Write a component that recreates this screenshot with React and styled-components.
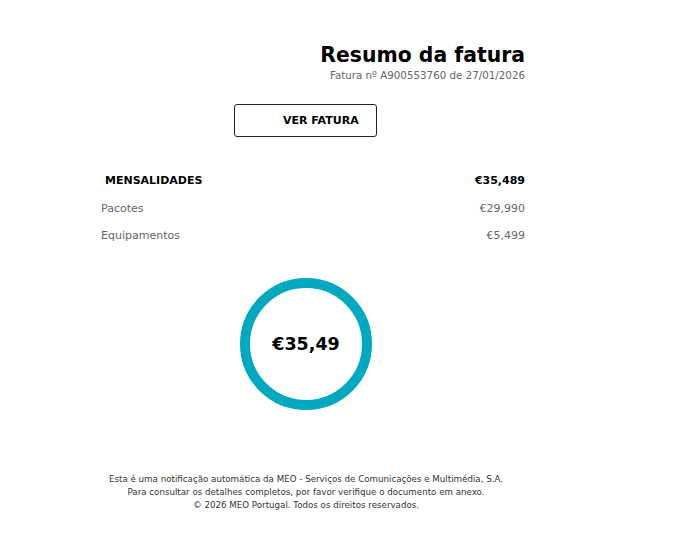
import React from 'react';
import styled, { createGlobalStyle } from 'styled-components';

const GlobalStyle = createGlobalStyle`
  body {
    margin: 0;
    background: #ffffff;
    font-family: "DejaVu Sans", Verdana, sans-serif;
    color: #000;
  }
`;

const Page = styled.div`
  width: 680px;
  height: 554px;
  background: #ffffff;
  padding-top: 43px;
  box-sizing: border-box;
`;

const Column = styled.div`
  width: 425px;
  margin-left: 100px;
`;

const Header = styled.div`
  display: flex;
  flex-direction: column;
  align-items: flex-end;
`;

const Title = styled.h1`
  margin: 0;
  font-size: 20.4px;
  font-weight: bold;
  line-height: 24px;
`;

const Subtitle = styled.div`
  margin-top: 2px;
  font-size: 10.3px;
  color: #666;
`;

const ButtonRow = styled.div`
  display: flex;
  padding-left: 134px;
  margin-top: 23px;
`;

const Button = styled.a`
  display: flex;
  align-items: center;
  width: 143px;
  height: 33px;
  box-sizing: border-box;
  padding-left: 48px;
  border: 1.5px solid #222;
  border-radius: 3px;
  font-size: 11px;
  font-weight: bold;
  color: #000;
  text-decoration: none;
`;

const Table = styled.div`
  margin-top: 30px;
  display: flex;
  flex-direction: column;
`;

const Row = styled.div`
  display: flex;
  justify-content: space-between;
  align-items: center;
  height: 27.5px;
  font-size: 11px;
  color: ${(p) => (p.$head ? '#000' : '#666')};
  font-weight: ${(p) => (p.$head ? 'bold' : 'normal')};
  padding-left: ${(p) => (p.$head ? '5px' : '1px')};
`;

const ChartWrap = styled.div`
  display: flex;
  padding-left: 140px;
  margin-top: 28px;
`;

const Ring = styled.div`
  width: 132px;
  height: 132px;
  box-sizing: border-box;
  border: 10px solid #00a9c0;
  border-radius: 50%;
  display: flex;
  align-items: center;
  justify-content: center;
  font-size: 17.5px;
  font-weight: bold;
`;

const Footer = styled.div`
  margin-top: 63px;
  width: 412px;
  text-align: center;
  font-size: 8.7px;
  line-height: 13px;
  color: #333;
`;

export default function App() {
  return (
    <Page>
      <GlobalStyle />
      <Column>
        <Header>
          <Title>Resumo da fatura</Title>
          <Subtitle>Fatura nº A900553760 de 27/01/2026</Subtitle>
        </Header>
        <ButtonRow>
          <Button href="#">VER FATURA</Button>
        </ButtonRow>
        <Table>
          <Row $head>
            <span>MENSALIDADES</span>
            <span>€35,489</span>
          </Row>
          <Row>
            <span>Pacotes</span>
            <span>€29,990</span>
          </Row>
          <Row>
            <span>Equipamentos</span>
            <span>€5,499</span>
          </Row>
        </Table>
        <ChartWrap>
          <Ring>€35,49</Ring>
        </ChartWrap>
        <Footer>
          Esta é uma notificação automática da MEO - Serviços de Comunicações e Multimédia, S.A.
          <br />
          Para consultar os detalhes completos, por favor verifique o documento em anexo.
          <br />
          © 2026 MEO Portugal. Todos os direitos reservados.
        </Footer>
      </Column>
    </Page>
  );
}
